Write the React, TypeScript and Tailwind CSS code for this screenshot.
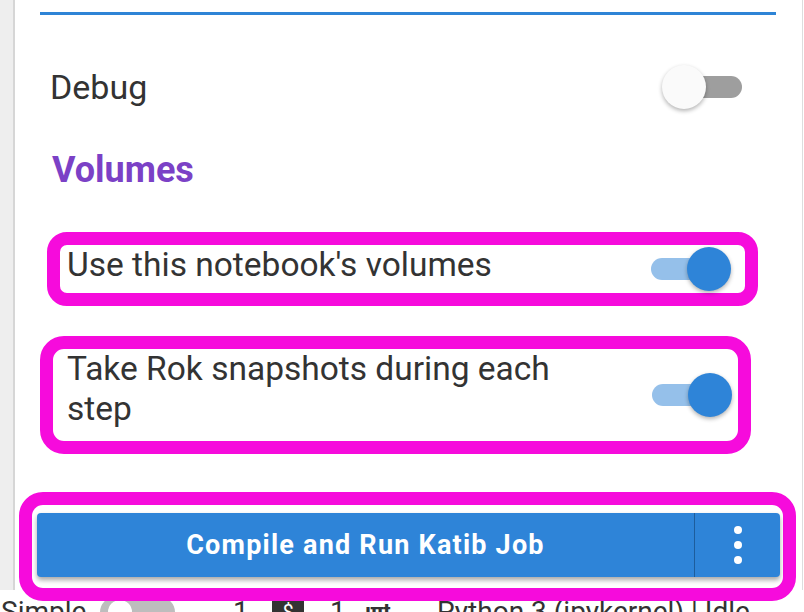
type ToggleProps = { on: boolean }

const Toggle = ({ on }: ToggleProps) => {
  return (
    <div className="relative h-[44px] w-[80px] shrink-0">
      <div
        className={
          on
            ? "absolute left-0 top-[11px] h-[22px] w-[68px] rounded-full bg-[#95c0ea]"
            : "absolute left-[12px] top-[11px] h-[22px] w-[68px] rounded-full bg-[#9e9e9e]"
        }
      />
      <div
        className={
          on
            ? "absolute left-[36px] top-0 h-[44px] w-[44px] rounded-full bg-[#2e84d8] shadow-[0_2px_4px_rgba(0,0,0,0.3)]"
            : "absolute left-0 top-0 h-[44px] w-[44px] rounded-full bg-[#fafafa] shadow-[0_2px_4px_rgba(0,0,0,0.3)]"
        }
      />
    </div>
  )
}

const StatusBar = () => {
  return (
    <div className="flex h-[44px] shrink-0 items-center bg-white text-[28px] leading-[44px] text-[#333]">
      <span className="ml-[1px] w-[86px]">Simple</span>
      <div className="relative ml-[13px] h-[30px] w-[75px] rounded-full bg-[#bdbdbd]">
        <div className="absolute left-[8px] top-[3px] h-[24px] w-[24px] rounded-full bg-white" />
      </div>
      <span className="ml-[58px] w-[15px]">1</span>
      <div className="ml-[24px] flex h-[30px] w-[32px] items-center justify-center bg-[#333] text-[20px] text-white">
        $
      </div>
      <span className="ml-[26px] w-[15px]">1</span>
      <span className="ml-[20px] w-[32px] text-[22px] font-bold tracking-[-1px]">ıπt</span>
      <span className="ml-[40px]">Python 3 (ipykernel) | Idle</span>
    </div>
  )
}

export default function App() {
  return (
    <div className="flex h-[612px] w-[804px] flex-col overflow-hidden bg-white font-['Roboto','Liberation_Sans',sans-serif] text-[#333]">
      <div className="flex h-[590px] shrink-0">
        <div className="w-[13px] shrink-0 bg-[#eeeeee]" />
        <div className="w-[2px] shrink-0 bg-[#d6d6d6]" />
        <div className="flex w-[788px] flex-col border-r border-[#dddddd] bg-white">
          <div className="ml-[25px] mt-[12px] h-[3px] w-[736px] shrink-0 bg-[#2e84d6]" />

          <div className="ml-[35px] mt-[44px] flex h-[56px] w-[692px] shrink-0 items-center justify-between">
            <span className="text-[34px] leading-[40px]">Debug</span>
            <Toggle on={false} />
          </div>

          <h2 className="ml-[37px] mt-[35px] shrink-0 text-[36px] font-bold leading-[40px] text-[#7b41c6]">
            Volumes
          </h2>

          <div className="ml-[32px] mt-[42px] flex h-[74px] w-[711px] shrink-0 items-start justify-between rounded-[20px] border-[13px] border-[#f60bdc] pl-[7px] pr-[14px]">
            <span className="text-[33.5px] leading-[40px]">Use this notebook's volumes</span>
            <div className="self-center">
              <Toggle on={true} />
            </div>
          </div>

          <div className="ml-[25px] mt-[30px] flex h-[118px] w-[711px] shrink-0 items-start justify-between rounded-[24px] border-[13px] border-[#f60bdc] pl-[14px] pr-[6px]">
            <span className="w-[520px] text-[33.5px] leading-[40px]">
              Take Rok snapshots during each step
            </span>
            <div className="self-center">
              <Toggle on={true} />
            </div>
          </div>

          <div className="relative z-10 ml-[4px] mt-[38px] w-[777px] shrink-0 rounded-[24px] border-[13px] border-[#f60bdc] bg-white pb-[11px] pl-[5px] pr-[3px] pt-[8px]">
            <div className="flex h-[64px] rounded-[4px] bg-[#2e84d8] text-white shadow-[0_3px_5px_rgba(0,0,0,0.35)]">
              <div className="flex flex-1 items-center justify-center border-r border-[#1d5d9c] text-[27px] font-bold tracking-[0.045em]">
                Compile and Run Katib Job
              </div>
              <div className="flex w-[85px] flex-col items-center justify-center gap-[7px]">
                <span className="h-[8px] w-[8px] rounded-full bg-white" />
                <span className="h-[8px] w-[8px] rounded-full bg-white" />
                <span className="h-[8px] w-[8px] rounded-full bg-white" />
              </div>
            </div>
          </div>
        </div>
      </div>
      <StatusBar />
    </div>
  )
}
